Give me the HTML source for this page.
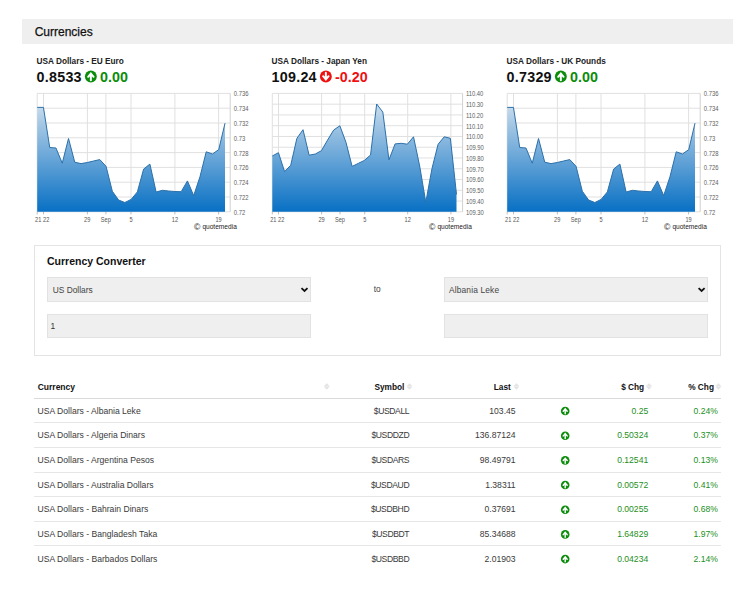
<!DOCTYPE html>
<html><head><meta charset="utf-8"><title>Currencies</title>
<style>
html,body{margin:0;padding:0;background:#fff;}
body{width:750px;height:597px;position:relative;overflow:hidden;font-family:"Liberation Sans", sans-serif;}
.t{position:absolute;white-space:nowrap;line-height:0;font-family:"Liberation Sans", sans-serif;}
.chart{position:absolute;overflow:visible;}
.chart text{font-family:"Liberation Sans", sans-serif;}
.yl{font-size:6.4px;fill:#5e5e5e;}
.xl{font-size:6.4px;fill:#555;}
.qm{font-size:7.6px;fill:#222;}
.hdr{position:absolute;left:22px;top:19px;width:711px;height:24.5px;background:#efefef;}
.box{position:absolute;left:34px;top:245px;width:685px;height:109px;border:1px solid #e4e4e4;}
.fld{position:absolute;background:#efefef;border:1px solid #e2e2e2;box-sizing:border-box;}
.rule{position:absolute;left:34px;width:687px;height:1px;background:#e3e3e3;}
svg.ov{position:absolute;left:0;top:0;}
</style></head><body>
<div class="hdr"></div>
<div class="t" style="left:34.7px;top:32.14px;font-size:12px;font-weight:400;color:#111;-webkit-text-stroke:0.25px #111;">Currencies</div>
<div class="t" style="left:36.6px;top:61.64px;font-size:8.25px;font-weight:700;color:#222;">USA Dollars - EU Euro</div>
<div class="t" style="left:36.6px;top:76.65px;font-size:14.3px;font-weight:700;color:#111;letter-spacing:0.25px;">0.8533</div>
<div class="t" style="left:271.6px;top:61.64px;font-size:8.25px;font-weight:700;color:#222;">USA Dollars - Japan Yen</div>
<div class="t" style="left:271.6px;top:76.65px;font-size:14.3px;font-weight:700;color:#111;letter-spacing:0.25px;">109.24</div>
<div class="t" style="left:506.6px;top:61.64px;font-size:8.25px;font-weight:700;color:#222;">USA Dollars - UK Pounds</div>
<div class="t" style="left:506.6px;top:76.65px;font-size:14.3px;font-weight:700;color:#111;letter-spacing:0.25px;">0.7329</div>
<svg class="chart" style="left:30px;top:85px" width="240" height="150" viewBox="30 85 240 150">
<defs><linearGradient id="g0" x1="0" y1="93.4" x2="0" y2="211.8" gradientUnits="userSpaceOnUse"><stop offset="0" stop-color="#e2ebf3"/><stop offset="0.25" stop-color="#a6c8e4"/><stop offset="1" stop-color="#0870c4"/></linearGradient></defs>
<path d="M37.2 93.4H230.2 M37.2 108.2H230.2 M37.2 123H230.2 M37.2 137.8H230.2 M37.2 152.6H230.2 M37.2 167.4H230.2 M37.2 182.2H230.2 M37.2 197H230.2 M37.2 211.8H230.2 M43.5 93.4V211.8 M87.4 93.4V211.8 M105.9 93.4V211.8 M131 93.4V211.8 M174.9 93.4V211.8 M218.6 93.4V211.8 M37.2 93.4V211.8" stroke="#e0e0e0" stroke-width="1" fill="none"/>
<path d="M230.2 93.4V211.8" stroke="#d0d0d0" stroke-width="1" fill="none"/>
<path d="M43.5 211.8V214.4 M87.4 211.8V214.4 M105.9 211.8V214.4 M131 211.8V214.4 M174.9 211.8V214.4 M218.6 211.8V214.4 M37.2 211.8V214.4" stroke="#b4b4b4" stroke-width="0.9" fill="none"/>
<path d="M37.2 107.4 L43.46 107.4 L49.72 147.5 L55.98 148 L62.24 163.2 L68.5 138.5 L74.76 162.2 L81.02 163.6 L87.28 162.5 L93.54 161 L99.8 159.6 L106.06 166.3 L112.32 191.2 L118.58 200 L124.84 202.5 L131.1 199.4 L137.36 191.9 L143.62 169.1 L149.88 164.1 L156.14 192 L162.4 190.3 L168.66 191 L174.92 191.5 L181.18 191.7 L187.44 180.9 L193.7 195.6 L199.96 176.8 L206.22 151.8 L212.48 154 L218.74 149.6 L225 123.2 L225 211.8 L37.2 211.8 Z" fill="url(#g0)"/>
<path d="M37.2 107.4 L43.46 107.4 L49.72 147.5 L55.98 148 L62.24 163.2 L68.5 138.5 L74.76 162.2 L81.02 163.6 L87.28 162.5 L93.54 161 L99.8 159.6 L106.06 166.3 L112.32 191.2 L118.58 200 L124.84 202.5 L131.1 199.4 L137.36 191.9 L143.62 169.1 L149.88 164.1 L156.14 192 L162.4 190.3 L168.66 191 L174.92 191.5 L181.18 191.7 L187.44 180.9 L193.7 195.6 L199.96 176.8 L206.22 151.8 L212.48 154 L218.74 149.6 L225 123.2" stroke="#2c70aa" stroke-width="1" fill="none" stroke-linejoin="round"/>
<text x="233.8" y="96.3" class="yl" textLength="14.65" lengthAdjust="spacingAndGlyphs">0.736</text>
<text x="233.8" y="111.1" class="yl" textLength="14.65" lengthAdjust="spacingAndGlyphs">0.734</text>
<text x="233.8" y="125.9" class="yl" textLength="14.65" lengthAdjust="spacingAndGlyphs">0.732</text>
<text x="233.8" y="140.7" class="yl" textLength="11.4" lengthAdjust="spacingAndGlyphs">0.73</text>
<text x="233.8" y="155.5" class="yl" textLength="14.65" lengthAdjust="spacingAndGlyphs">0.728</text>
<text x="233.8" y="170.3" class="yl" textLength="14.65" lengthAdjust="spacingAndGlyphs">0.726</text>
<text x="233.8" y="185.1" class="yl" textLength="14.65" lengthAdjust="spacingAndGlyphs">0.724</text>
<text x="233.8" y="199.9" class="yl" textLength="14.65" lengthAdjust="spacingAndGlyphs">0.722</text>
<text x="233.8" y="214.7" class="yl" textLength="11.4" lengthAdjust="spacingAndGlyphs">0.72</text>
<text x="38.2" y="221.8" class="xl" text-anchor="middle" textLength="6.26" lengthAdjust="spacingAndGlyphs">21</text>
<text x="43" y="221.8" class="xl" text-anchor="start" textLength="6.26" lengthAdjust="spacingAndGlyphs">22</text>
<text x="87.2" y="221.8" class="xl" text-anchor="middle" textLength="6.26" lengthAdjust="spacingAndGlyphs">29</text>
<text x="105.8" y="221.8" class="xl" text-anchor="middle" textLength="10.02" lengthAdjust="spacingAndGlyphs">Sep</text>
<text x="131" y="221.8" class="xl" text-anchor="middle" textLength="3.13" lengthAdjust="spacingAndGlyphs">5</text>
<text x="174.9" y="221.8" class="xl" text-anchor="middle" textLength="6.26" lengthAdjust="spacingAndGlyphs">12</text>
<text x="218.6" y="221.8" class="xl" text-anchor="middle" textLength="6.26" lengthAdjust="spacingAndGlyphs">19</text>
<text x="194" y="229.6" class="qm" style="font-size:8.6px">©</text>
<text x="202.4" y="229.3" class="qm" textLength="34.4" lengthAdjust="spacingAndGlyphs">quotemedia</text>
</svg>
<svg class="chart" style="left:265px;top:85px" width="240" height="150" viewBox="265 85 240 150">
<defs><linearGradient id="gy" x1="0" y1="93.4" x2="0" y2="211.8" gradientUnits="userSpaceOnUse"><stop offset="0" stop-color="#e2ebf3"/><stop offset="0.25" stop-color="#a6c8e4"/><stop offset="1" stop-color="#0870c4"/></linearGradient></defs>
<path d="M272.3 93.4H462.6 M272.3 104.16H462.6 M272.3 114.93H462.6 M272.3 125.69H462.6 M272.3 136.45H462.6 M272.3 147.22H462.6 M272.3 157.98H462.6 M272.3 168.75H462.6 M272.3 179.51H462.6 M272.3 190.27H462.6 M272.3 201.04H462.6 M272.3 211.8H462.6 M278.5 93.4V211.8 M321.6 93.4V211.8 M340 93.4V211.8 M364.7 93.4V211.8 M407.7 93.4V211.8 M450.9 93.4V211.8 M272.3 93.4V211.8" stroke="#e0e0e0" stroke-width="1" fill="none"/>
<path d="M462.6 93.4V211.8" stroke="#d0d0d0" stroke-width="1" fill="none"/>
<path d="M278.5 211.8V214.4 M321.6 211.8V214.4 M340 211.8V214.4 M364.7 211.8V214.4 M407.7 211.8V214.4 M450.9 211.8V214.4 M272.3 211.8V214.4" stroke="#b4b4b4" stroke-width="0.9" fill="none"/>
<path d="M272.3 156 L278.44 152.7 L284.58 171.6 L290.72 165.2 L296.86 138.4 L303 129.7 L309.14 155.2 L315.28 154 L321.42 150.7 L327.56 140.1 L333.7 130 L339.84 125.8 L345.98 142.3 L352.12 166.4 L358.26 163.4 L364.4 160.4 L370.54 155 L376.68 104 L382.82 112.1 L388.96 159.8 L395.1 143.9 L401.24 143.3 L407.38 144.2 L413.52 136.8 L419.66 166 L425.8 202.2 L431.94 168.7 L438.08 144.3 L444.22 136.8 L450.36 138.3 L456.5 194.4 L456.5 211.8 L272.3 211.8 Z" fill="url(#gy)"/>
<path d="M272.3 156 L278.44 152.7 L284.58 171.6 L290.72 165.2 L296.86 138.4 L303 129.7 L309.14 155.2 L315.28 154 L321.42 150.7 L327.56 140.1 L333.7 130 L339.84 125.8 L345.98 142.3 L352.12 166.4 L358.26 163.4 L364.4 160.4 L370.54 155 L376.68 104 L382.82 112.1 L388.96 159.8 L395.1 143.9 L401.24 143.3 L407.38 144.2 L413.52 136.8 L419.66 166 L425.8 202.2 L431.94 168.7 L438.08 144.3 L444.22 136.8 L450.36 138.3 L456.5 194.4" stroke="#2c70aa" stroke-width="1" fill="none" stroke-linejoin="round"/>
<text x="465.9" y="96.3" class="yl" textLength="17.48" lengthAdjust="spacingAndGlyphs">110.40</text>
<text x="465.9" y="107.06" class="yl" textLength="17.48" lengthAdjust="spacingAndGlyphs">110.30</text>
<text x="465.9" y="117.83" class="yl" textLength="17.48" lengthAdjust="spacingAndGlyphs">110.20</text>
<text x="465.9" y="128.59" class="yl" textLength="17.48" lengthAdjust="spacingAndGlyphs">110.10</text>
<text x="465.9" y="139.35" class="yl" textLength="17.48" lengthAdjust="spacingAndGlyphs">110.00</text>
<text x="465.9" y="150.12" class="yl" textLength="17.91" lengthAdjust="spacingAndGlyphs">109.90</text>
<text x="465.9" y="160.88" class="yl" textLength="17.91" lengthAdjust="spacingAndGlyphs">109.80</text>
<text x="465.9" y="171.65" class="yl" textLength="17.91" lengthAdjust="spacingAndGlyphs">109.70</text>
<text x="465.9" y="182.41" class="yl" textLength="17.91" lengthAdjust="spacingAndGlyphs">109.60</text>
<text x="465.9" y="193.17" class="yl" textLength="17.91" lengthAdjust="spacingAndGlyphs">109.50</text>
<text x="465.9" y="203.94" class="yl" textLength="17.91" lengthAdjust="spacingAndGlyphs">109.40</text>
<text x="465.9" y="214.7" class="yl" textLength="17.91" lengthAdjust="spacingAndGlyphs">109.30</text>
<text x="273.3" y="221.8" class="xl" text-anchor="middle" textLength="6.26" lengthAdjust="spacingAndGlyphs">21</text>
<text x="278" y="221.8" class="xl" text-anchor="start" textLength="6.26" lengthAdjust="spacingAndGlyphs">22</text>
<text x="321.6" y="221.8" class="xl" text-anchor="middle" textLength="6.26" lengthAdjust="spacingAndGlyphs">29</text>
<text x="340" y="221.8" class="xl" text-anchor="middle" textLength="10.02" lengthAdjust="spacingAndGlyphs">Sep</text>
<text x="364.7" y="221.8" class="xl" text-anchor="middle" textLength="3.13" lengthAdjust="spacingAndGlyphs">5</text>
<text x="407.7" y="221.8" class="xl" text-anchor="middle" textLength="6.26" lengthAdjust="spacingAndGlyphs">12</text>
<text x="450.9" y="221.8" class="xl" text-anchor="middle" textLength="6.26" lengthAdjust="spacingAndGlyphs">19</text>
<text x="429" y="229.6" class="qm" style="font-size:8.6px">©</text>
<text x="437.4" y="229.3" class="qm" textLength="34.4" lengthAdjust="spacingAndGlyphs">quotemedia</text>
</svg>
<svg class="chart" style="left:500px;top:85px" width="240" height="150" viewBox="500 85 240 150">
<defs><linearGradient id="g470" x1="0" y1="93.4" x2="0" y2="211.8" gradientUnits="userSpaceOnUse"><stop offset="0" stop-color="#e2ebf3"/><stop offset="0.25" stop-color="#a6c8e4"/><stop offset="1" stop-color="#0870c4"/></linearGradient></defs>
<path d="M507.2 93.4H700.2 M507.2 108.2H700.2 M507.2 123H700.2 M507.2 137.8H700.2 M507.2 152.6H700.2 M507.2 167.4H700.2 M507.2 182.2H700.2 M507.2 197H700.2 M507.2 211.8H700.2 M513.5 93.4V211.8 M557.4 93.4V211.8 M575.9 93.4V211.8 M601 93.4V211.8 M644.9 93.4V211.8 M688.6 93.4V211.8 M507.2 93.4V211.8" stroke="#e0e0e0" stroke-width="1" fill="none"/>
<path d="M700.2 93.4V211.8" stroke="#d0d0d0" stroke-width="1" fill="none"/>
<path d="M513.5 211.8V214.4 M557.4 211.8V214.4 M575.9 211.8V214.4 M601 211.8V214.4 M644.9 211.8V214.4 M688.6 211.8V214.4 M507.2 211.8V214.4" stroke="#b4b4b4" stroke-width="0.9" fill="none"/>
<path d="M507.2 107.4 L513.46 107.4 L519.72 147.5 L525.98 148 L532.24 163.2 L538.5 138.5 L544.76 162.2 L551.02 163.6 L557.28 162.5 L563.54 161 L569.8 159.6 L576.06 166.3 L582.32 191.2 L588.58 200 L594.84 202.5 L601.1 199.4 L607.36 191.9 L613.62 169.1 L619.88 164.1 L626.14 192 L632.4 190.3 L638.66 191 L644.92 191.5 L651.18 191.7 L657.44 180.9 L663.7 195.6 L669.96 176.8 L676.22 151.8 L682.48 154 L688.74 149.6 L695 123.2 L695 211.8 L507.2 211.8 Z" fill="url(#g470)"/>
<path d="M507.2 107.4 L513.46 107.4 L519.72 147.5 L525.98 148 L532.24 163.2 L538.5 138.5 L544.76 162.2 L551.02 163.6 L557.28 162.5 L563.54 161 L569.8 159.6 L576.06 166.3 L582.32 191.2 L588.58 200 L594.84 202.5 L601.1 199.4 L607.36 191.9 L613.62 169.1 L619.88 164.1 L626.14 192 L632.4 190.3 L638.66 191 L644.92 191.5 L651.18 191.7 L657.44 180.9 L663.7 195.6 L669.96 176.8 L676.22 151.8 L682.48 154 L688.74 149.6 L695 123.2" stroke="#2c70aa" stroke-width="1" fill="none" stroke-linejoin="round"/>
<text x="703.8" y="96.3" class="yl" textLength="14.65" lengthAdjust="spacingAndGlyphs">0.736</text>
<text x="703.8" y="111.1" class="yl" textLength="14.65" lengthAdjust="spacingAndGlyphs">0.734</text>
<text x="703.8" y="125.9" class="yl" textLength="14.65" lengthAdjust="spacingAndGlyphs">0.732</text>
<text x="703.8" y="140.7" class="yl" textLength="11.4" lengthAdjust="spacingAndGlyphs">0.73</text>
<text x="703.8" y="155.5" class="yl" textLength="14.65" lengthAdjust="spacingAndGlyphs">0.728</text>
<text x="703.8" y="170.3" class="yl" textLength="14.65" lengthAdjust="spacingAndGlyphs">0.726</text>
<text x="703.8" y="185.1" class="yl" textLength="14.65" lengthAdjust="spacingAndGlyphs">0.724</text>
<text x="703.8" y="199.9" class="yl" textLength="14.65" lengthAdjust="spacingAndGlyphs">0.722</text>
<text x="703.8" y="214.7" class="yl" textLength="11.4" lengthAdjust="spacingAndGlyphs">0.72</text>
<text x="508.2" y="221.8" class="xl" text-anchor="middle" textLength="6.26" lengthAdjust="spacingAndGlyphs">21</text>
<text x="513" y="221.8" class="xl" text-anchor="start" textLength="6.26" lengthAdjust="spacingAndGlyphs">22</text>
<text x="557.2" y="221.8" class="xl" text-anchor="middle" textLength="6.26" lengthAdjust="spacingAndGlyphs">29</text>
<text x="575.8" y="221.8" class="xl" text-anchor="middle" textLength="10.02" lengthAdjust="spacingAndGlyphs">Sep</text>
<text x="601" y="221.8" class="xl" text-anchor="middle" textLength="3.13" lengthAdjust="spacingAndGlyphs">5</text>
<text x="644.9" y="221.8" class="xl" text-anchor="middle" textLength="6.26" lengthAdjust="spacingAndGlyphs">12</text>
<text x="688.6" y="221.8" class="xl" text-anchor="middle" textLength="6.26" lengthAdjust="spacingAndGlyphs">19</text>
<text x="664" y="229.6" class="qm" style="font-size:8.6px">©</text>
<text x="672.4" y="229.3" class="qm" textLength="34.4" lengthAdjust="spacingAndGlyphs">quotemedia</text>
</svg>
<div class="t" style="left:100.1px;top:76.65px;font-size:14.3px;font-weight:700;color:#0b8c0b;">0.00</div>
<div class="t" style="left:335.1px;top:76.65px;font-size:14.3px;font-weight:700;color:#ee1111;">-0.20</div>
<div class="t" style="left:570.1px;top:76.65px;font-size:14.3px;font-weight:700;color:#0b8c0b;">0.00</div>
<div class="box"></div>
<div class="t" style="left:47px;top:261.46px;font-size:10.5px;font-weight:700;color:#111;">Currency Converter</div>
<div class="fld" style="left:46.9px;top:277.4px;width:264.2px;height:24.3px"></div>
<div class="fld" style="left:444.3px;top:277.4px;width:263.9px;height:24.3px"></div>
<div class="fld" style="left:46.9px;top:313.6px;width:264.2px;height:24px"></div>
<div class="fld" style="left:444.3px;top:313.6px;width:263.9px;height:24px"></div>
<div class="t" style="left:52.7px;top:289.99px;font-size:8.4px;font-weight:400;color:#444;">US Dollars</div>
<div class="t" style="left:449px;top:289.89px;font-size:8.4px;font-weight:400;color:#444;letter-spacing:0.15px;">Albania Leke</div>
<div class="t" style="left:373.7px;top:289.49px;font-size:8.4px;font-weight:400;color:#444;">to</div>
<div class="t" style="left:50.4px;top:325.79px;font-size:8.4px;font-weight:400;color:#333;">1</div>
<div class="rule" style="top:397.6px;height:1.4px;background:#dadada"></div>
<div class="rule" style="top:422.32px;background:#e6e6e6"></div>
<div class="rule" style="top:446.94px;background:#e6e6e6"></div>
<div class="rule" style="top:471.56px;background:#e6e6e6"></div>
<div class="rule" style="top:496.18px;background:#e6e6e6"></div>
<div class="rule" style="top:520.8px;background:#e6e6e6"></div>
<div class="rule" style="top:545.42px;background:#e6e6e6"></div>
<div class="t" style="left:37.7px;top:386.75px;font-size:8.5px;font-weight:700;color:#111;">Currency</div>
<div class="t" style="right:345.6px;top:386.82px;font-size:8.3px;font-weight:700;color:#111;">Symbol</div>
<div class="t" style="right:239.2px;top:386.82px;font-size:8.3px;font-weight:700;color:#111;">Last</div>
<div class="t" style="right:105.8px;top:386.82px;font-size:8.3px;font-weight:700;color:#111;">$ Chg</div>
<div class="t" style="right:36px;top:386.82px;font-size:8.3px;font-weight:700;color:#111;">% Chg</div>
<div class="t" style="left:37.5px;top:410.72px;font-size:8.6px;font-weight:400;color:#3a3a3a;">USA Dollars - Albania Leke</div>
<div class="t" style="right:340.8px;top:410.72px;font-size:8.6px;font-weight:400;color:#3a3a3a;letter-spacing:-0.4px;">$USDALL</div>
<div class="t" style="right:234.4px;top:410.72px;font-size:8.6px;font-weight:400;color:#3a3a3a;">103.45</div>
<div class="t" style="right:101.8px;top:410.72px;font-size:8.6px;font-weight:400;color:#1c8f1c;">0.25</div>
<div class="t" style="right:32.1px;top:410.72px;font-size:8.6px;font-weight:400;color:#1c8f1c;">0.24%</div>
<div class="t" style="left:37.5px;top:435.4px;font-size:8.6px;font-weight:400;color:#3a3a3a;">USA Dollars - Algeria Dinars</div>
<div class="t" style="right:340.8px;top:435.4px;font-size:8.6px;font-weight:400;color:#3a3a3a;letter-spacing:-0.4px;">$USDDZD</div>
<div class="t" style="right:234.4px;top:435.4px;font-size:8.6px;font-weight:400;color:#3a3a3a;">136.87124</div>
<div class="t" style="right:101.8px;top:435.4px;font-size:8.6px;font-weight:400;color:#1c8f1c;">0.50324</div>
<div class="t" style="right:32.1px;top:435.4px;font-size:8.6px;font-weight:400;color:#1c8f1c;">0.37%</div>
<div class="t" style="left:37.5px;top:460.08px;font-size:8.6px;font-weight:400;color:#3a3a3a;">USA Dollars - Argentina Pesos</div>
<div class="t" style="right:340.8px;top:460.08px;font-size:8.6px;font-weight:400;color:#3a3a3a;letter-spacing:-0.4px;">$USDARS</div>
<div class="t" style="right:234.4px;top:460.08px;font-size:8.6px;font-weight:400;color:#3a3a3a;">98.49791</div>
<div class="t" style="right:101.8px;top:460.08px;font-size:8.6px;font-weight:400;color:#1c8f1c;">0.12541</div>
<div class="t" style="right:32.1px;top:460.08px;font-size:8.6px;font-weight:400;color:#1c8f1c;">0.13%</div>
<div class="t" style="left:37.5px;top:484.76px;font-size:8.6px;font-weight:400;color:#3a3a3a;">USA Dollars - Australia Dollars</div>
<div class="t" style="right:340.8px;top:484.76px;font-size:8.6px;font-weight:400;color:#3a3a3a;letter-spacing:-0.4px;">$USDAUD</div>
<div class="t" style="right:234.4px;top:484.76px;font-size:8.6px;font-weight:400;color:#3a3a3a;">1.38311</div>
<div class="t" style="right:101.8px;top:484.76px;font-size:8.6px;font-weight:400;color:#1c8f1c;">0.00572</div>
<div class="t" style="right:32.1px;top:484.76px;font-size:8.6px;font-weight:400;color:#1c8f1c;">0.41%</div>
<div class="t" style="left:37.5px;top:509.44px;font-size:8.6px;font-weight:400;color:#3a3a3a;">USA Dollars - Bahrain Dinars</div>
<div class="t" style="right:340.8px;top:509.44px;font-size:8.6px;font-weight:400;color:#3a3a3a;letter-spacing:-0.4px;">$USDBHD</div>
<div class="t" style="right:234.4px;top:509.44px;font-size:8.6px;font-weight:400;color:#3a3a3a;">0.37691</div>
<div class="t" style="right:101.8px;top:509.44px;font-size:8.6px;font-weight:400;color:#1c8f1c;">0.00255</div>
<div class="t" style="right:32.1px;top:509.44px;font-size:8.6px;font-weight:400;color:#1c8f1c;">0.68%</div>
<div class="t" style="left:37.5px;top:534.12px;font-size:8.6px;font-weight:400;color:#3a3a3a;">USA Dollars - Bangladesh Taka</div>
<div class="t" style="right:340.8px;top:534.12px;font-size:8.6px;font-weight:400;color:#3a3a3a;letter-spacing:-0.4px;">$USDBDT</div>
<div class="t" style="right:234.4px;top:534.12px;font-size:8.6px;font-weight:400;color:#3a3a3a;">85.34688</div>
<div class="t" style="right:101.8px;top:534.12px;font-size:8.6px;font-weight:400;color:#1c8f1c;">1.64829</div>
<div class="t" style="right:32.1px;top:534.12px;font-size:8.6px;font-weight:400;color:#1c8f1c;">1.97%</div>
<div class="t" style="left:37.5px;top:558.8px;font-size:8.6px;font-weight:400;color:#3a3a3a;">USA Dollars - Barbados Dollars</div>
<div class="t" style="right:340.8px;top:558.8px;font-size:8.6px;font-weight:400;color:#3a3a3a;letter-spacing:-0.4px;">$USDBBD</div>
<div class="t" style="right:234.4px;top:558.8px;font-size:8.6px;font-weight:400;color:#3a3a3a;">2.01903</div>
<div class="t" style="right:101.8px;top:558.8px;font-size:8.6px;font-weight:400;color:#1c8f1c;">0.04234</div>
<div class="t" style="right:32.1px;top:558.8px;font-size:8.6px;font-weight:400;color:#1c8f1c;">2.14%</div>
<svg class="ov" width="750" height="597" viewBox="0 0 750 597">
<circle cx="90.85" cy="76.5" r="5.95" fill="#0b8c0b"/><path d="M90.85 80.37V73.92 M88.12 76.8L90.85 73.57L93.58 76.8" stroke="#fff" stroke-width="1.98" fill="none" stroke-linecap="round" stroke-linejoin="miter"/>
<circle cx="325.85" cy="76.5" r="5.95" fill="#ee1111"/><path d="M325.85 72.63V79.08 M323.12 76.2L325.85 79.43L328.58 76.2" stroke="#fff" stroke-width="1.98" fill="none" stroke-linecap="round" stroke-linejoin="miter"/>
<circle cx="560.85" cy="76.5" r="5.95" fill="#0b8c0b"/><path d="M560.85 80.37V73.92 M558.12 76.8L560.85 73.57L563.58 76.8" stroke="#fff" stroke-width="1.98" fill="none" stroke-linecap="round" stroke-linejoin="miter"/>
<circle cx="565.2" cy="411" r="4.3" fill="#0b8c0b"/><path d="M565.2 413.8V409.14 M563.23 411.21L565.2 408.89L567.17 411.21" stroke="#fff" stroke-width="1.43" fill="none" stroke-linecap="round" stroke-linejoin="miter"/>
<circle cx="565.2" cy="435.68" r="4.3" fill="#0b8c0b"/><path d="M565.2 438.48V433.82 M563.23 435.89L565.2 433.57L567.17 435.89" stroke="#fff" stroke-width="1.43" fill="none" stroke-linecap="round" stroke-linejoin="miter"/>
<circle cx="565.2" cy="460.36" r="4.3" fill="#0b8c0b"/><path d="M565.2 463.16V458.5 M563.23 460.57L565.2 458.25L567.17 460.57" stroke="#fff" stroke-width="1.43" fill="none" stroke-linecap="round" stroke-linejoin="miter"/>
<circle cx="565.2" cy="485.04" r="4.3" fill="#0b8c0b"/><path d="M565.2 487.83V483.18 M563.23 485.25L565.2 482.93L567.17 485.25" stroke="#fff" stroke-width="1.43" fill="none" stroke-linecap="round" stroke-linejoin="miter"/>
<circle cx="565.2" cy="509.72" r="4.3" fill="#0b8c0b"/><path d="M565.2 512.51V507.86 M563.23 509.94L565.2 507.61L567.17 509.94" stroke="#fff" stroke-width="1.43" fill="none" stroke-linecap="round" stroke-linejoin="miter"/>
<circle cx="565.2" cy="534.4" r="4.3" fill="#0b8c0b"/><path d="M565.2 537.19V532.54 M563.23 534.62L565.2 532.29L567.17 534.62" stroke="#fff" stroke-width="1.43" fill="none" stroke-linecap="round" stroke-linejoin="miter"/>
<circle cx="565.2" cy="559.08" r="4.3" fill="#0b8c0b"/><path d="M565.2 561.87V557.22 M563.23 559.29L565.2 556.97L567.17 559.29" stroke="#fff" stroke-width="1.43" fill="none" stroke-linecap="round" stroke-linejoin="miter"/>
<path d="M324.3 386.05L326.8 383.4L329.3 386.05Z M324.3 386.75L326.8 389.4L329.3 386.75Z" fill="#e4e4e4" stroke="#e4e4e4" stroke-width="0.5" stroke-linejoin="round"/>
<path d="M407 386.05L409.5 383.4L412 386.05Z M407 386.75L409.5 389.4L412 386.75Z" fill="#e4e4e4" stroke="#e4e4e4" stroke-width="0.5" stroke-linejoin="round"/>
<path d="M513.9 386.05L516.4 383.4L518.9 386.05Z M513.9 386.75L516.4 389.4L518.9 386.75Z" fill="#e4e4e4" stroke="#e4e4e4" stroke-width="0.5" stroke-linejoin="round"/>
<path d="M646.5 386.05L649 383.4L651.5 386.05Z M646.5 386.75L649 389.4L651.5 386.75Z" fill="#e4e4e4" stroke="#e4e4e4" stroke-width="0.5" stroke-linejoin="round"/>
<path d="M715.9 386.05L718.4 383.4L720.9 386.05Z M715.9 386.75L718.4 389.4L720.9 386.75Z" fill="#e4e4e4" stroke="#e4e4e4" stroke-width="0.5" stroke-linejoin="round"/>
<path d="M301.5 288.2L304.5 291L307.5 288.2" stroke="#111" stroke-width="1.8" fill="none"/>
<path d="M698.6 288.2L701.6 291L704.6 288.2" stroke="#111" stroke-width="1.8" fill="none"/>
</svg>
</body></html>
